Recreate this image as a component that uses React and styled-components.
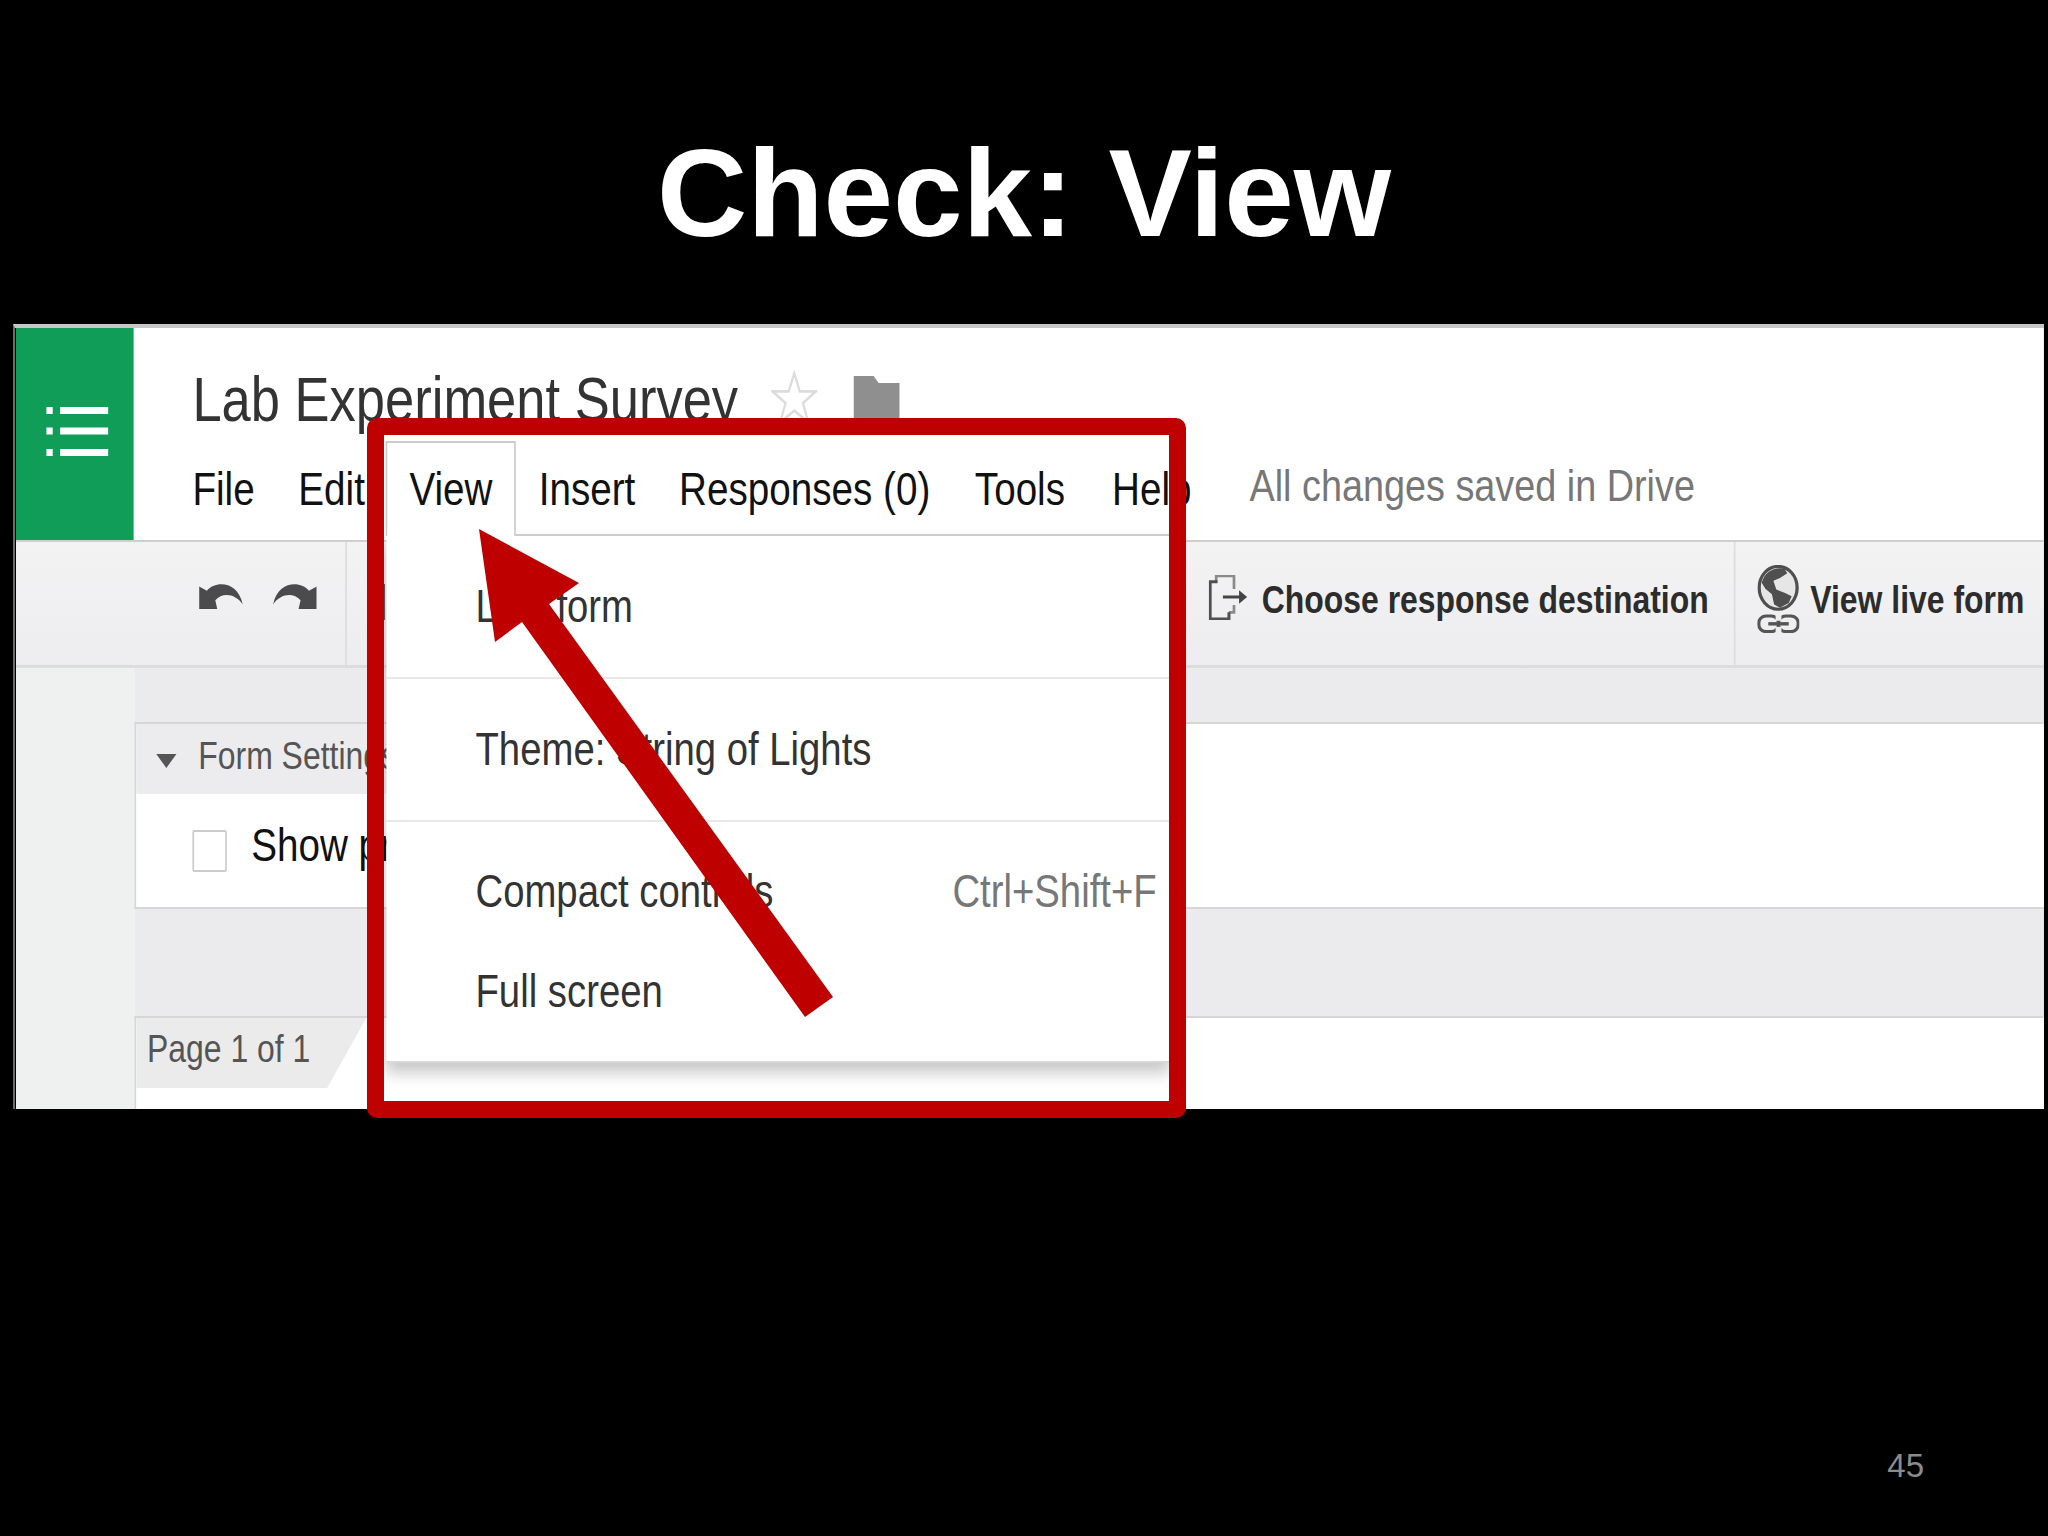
import React from "react";
import styled, { createGlobalStyle } from "styled-components";

const Global = createGlobalStyle`
  html, body { margin: 0; padding: 0; background: #000; }
  #root { width: 2048px; height: 1536px; }
`;

const Slide = styled.div`
  position: relative;
  width: 2048px;
  height: 1536px;
  background: #000;
  overflow: hidden;
  font-family: "Liberation Sans", Arial, sans-serif;
  display: flex;
  flex-direction: column;
`;

const SlideHead = styled.header`
  height: 324px;
  box-sizing: border-box;
  padding-top: 60px;
  display: flex;
  align-items: center;
  justify-content: center;
`;

const SlideTitle = styled.h1`
  margin: 0;
  color: #fff;
  font-size: 125px;
  line-height: 1;
  font-weight: 700;
`;

const Shot = styled.section`
  margin-left: 13px;
  width: 2031px;
  height: 785px;
  box-sizing: border-box;
  border-left: 2px solid #6c6c6c;
  border-top: 4px solid #c6c6c6;
  padding-left: 1px;
  background: #000;
  overflow: hidden;
`;

const Squeezed = styled.div`
  width: 2414px;
  height: 781px;
  transform: scaleX(0.84);
  transform-origin: left top;
  position: relative;
  background: #fff;
  color: #111;
  display: flex;
  flex-direction: column;
`;

const Header = styled.div`
  display: flex;
  height: 214px;
  box-sizing: border-box;
  border-bottom: 2px solid #cfcfcf;
  background: #fff;
`;

const Tile = styled.div`
  width: 140px;
  height: 212px;
  background: #0f9d58;
  display: flex;
  align-items: center;
  justify-content: center;
  padding: 0 0 6px 5px;
  box-sizing: border-box;
`;

const HeaderMain = styled.div`
  flex: 1;
  padding: 40px 0 0 44px;
  display: flex;
  flex-direction: column;
`;

const TitleRow = styled.div`
  display: flex;
  align-items: flex-start;
  padding-left: 26px;
  height: 62px;
`;

const DocTitle = styled.div`
  font-size: 62.5px;
  line-height: 62px;
  color: #333;
`;

const Star = styled.svg`
  width: 55px;
  height: 56px;
  margin: 2px 0 0 39px;
`;

const Folder = styled.svg`
  width: 55px;
  height: 50px;
  margin: 8px 0 0 43px;
`;

const MenuBar = styled.nav`
  display: flex;
  margin-top: 11px;
`;

const MenuItem = styled.div`
  font-size: 46px;
  line-height: 46px;
  height: 95px;
  box-sizing: border-box;
  padding: 23px 26px 0;
  color: #111;
  position: relative;
  z-index: ${(p) => (p.$active ? 3 : 1)};
  background: ${(p) => (p.$active ? "#fff" : "transparent")};
  border: 2px solid ${(p) => (p.$active ? "#ccc" : "transparent")};
  border-bottom: none;
  margin: 0 -2px 0 ${(p) => p.$extra - 2}px;
`;

const Status = styled.div`
  font-size: 45px;
  line-height: 46px;
  padding-top: 22px;
  margin-left: 43px;
  color: #777;
`;

const Toolbar = styled.div`
  height: 126px;
  box-sizing: border-box;
  border-bottom: 3px solid #dcdcdc;
  background: linear-gradient(#f3f3f4, #ededef);
  display: flex;
  align-items: stretch;
`;

const UndoGroup = styled.div`
  width: 394px;
  box-sizing: border-box;
  border-right: 2px solid #dcdcdc;
  padding: 41px 0 0 218px;
  display: flex;
  align-items: flex-start;
  gap: 36px;
`;

const ToolIcon = styled.svg`
  width: 52px;
  height: 26px;
`;

const Stub = styled.div`
  width: 3px;
  height: 36px;
  margin: 42px 0 0 42px;
  background: #333;
`;

const ChooseGroup = styled.div`
  margin-left: auto;
  width: 625px;
  box-sizing: border-box;
  display: flex;
  align-items: center;
  gap: 17px;
  padding-bottom: 8px;
`;

const LiveGroup = styled.div`
  width: 369px;
  box-sizing: border-box;
  border-left: 2px solid #dcdcdc;
  display: flex;
  align-items: center;
  gap: 13px;
  padding: 0 0 8px 26px;
`;

const ChooseIcon = styled.svg`
  width: 46px;
  height: 45px;
  flex: none;
  margin-top: -5px;
`;

const GlobeIcon = styled.svg`
  width: 50px;
  height: 68px;
  flex: none;
  margin-top: -2px;
`;

const ToolLabel = styled.span`
  font-size: 38px;
  font-weight: 700;
  line-height: 1;
  color: #2c2c2c;
  white-space: nowrap;
`;

const Workspace = styled.div`
  flex: 1;
  display: flex;
  min-height: 0;
`;

const Gutter = styled.div`
  width: 141px;
  background: #eff0f0;
`;

const WorkMain = styled.div`
  flex: 1;
  background: #ebebed;
  padding-top: 54px;
  display: flex;
  flex-direction: column;
`;

const SettingsCard = styled.div`
  height: 187px;
  box-sizing: border-box;
  background: #fff;
  border: 2px solid #d6d6d6;
  border-right: none;
`;

const SettingsHead = styled.div`
  width: 420px;
  height: 70px;
  box-sizing: border-box;
  background: #ececee;
  display: flex;
  align-items: center;
  padding: 0 0 6px 24px;
  gap: 26px;
`;

const Caret = styled.span`
  width: 0;
  height: 0;
  border-left: 12px solid transparent;
  border-right: 12px solid transparent;
  border-top: 14px solid #555;
  margin-top: 10px;
`;

const SettingsTitle = styled.span`
  font-size: 38px;
  line-height: 1;
  color: #555;
  white-space: nowrap;
`;

const SettingsRow = styled.div`
  display: flex;
  align-items: flex-start;
  gap: 29px;
  padding: 36px 0 0 67px;
`;

const Checkbox = styled.span`
  width: 41px;
  height: 42px;
  box-sizing: border-box;
  border: 2px solid #ccc;
  border-radius: 2px;
  background: #fff;
`;

const RowText = styled.span`
  font-size: 46px;
  line-height: 1;
  color: #111;
  margin-top: -8px;
`;

const PageCard = styled.div`
  flex: 1;
  margin-top: 107px;
  background: #fff;
  border-top: 2px solid #d6d6d6;
  border-left: 2px solid #d6d6d6;
`;

const PageTab = styled.div`
  width: 274px;
  height: 70px;
  box-sizing: border-box;
  padding: 12px 0 0 13px;
  background: #ebebeb;
  clip-path: polygon(0 0, 100% 0, 83% 100%, 0 100%);
  font-size: 38px;
  line-height: 38px;
  color: #555;
  white-space: nowrap;
`;

const Dropdown = styled.div`
  position: absolute;
  left: 441px;
  top: 206px;
  width: 933px;
  height: 529px;
  box-sizing: border-box;
  background: #fff;
  border-top: 2px solid #ccc;
  border-bottom: 2px solid #d8d8d8;
  box-shadow: 0 10px 16px rgba(0, 0, 0, 0.22);
  z-index: 2;
  display: flex;
  flex-direction: column;
  color: #333;
`;

const DropSection = styled.div`
  flex: ${(p) => (p.$grow ? 1 : "none")};
  height: ${(p) => (p.$grow ? "auto" : "143px")};
  box-sizing: border-box;
  padding-top: ${(p) => (p.$grow ? "20px" : "0")};
  display: flex;
  flex-direction: column;
  justify-content: ${(p) => (p.$grow ? "flex-start" : "center")};
  border-bottom: ${(p) => (p.$grow ? "none" : "2px solid #e8e8e8")};
`;

const DropRow = styled.div`
  display: flex;
  align-items: center;
  justify-content: space-between;
  height: ${(p) => (p.$tall ? "100px" : "auto")};
  padding: 0 16px 0 106px;
  font-size: 45.6px;
  line-height: 46px;
  white-space: nowrap;
`;

const Shortcut = styled.span`
  color: #777;
`;

const RedFrame = styled.div`
  position: absolute;
  left: 367px;
  top: 418px;
  width: 819px;
  height: 700px;
  box-sizing: border-box;
  border: 17px solid #bf0000;
  border-radius: 10px;
  pointer-events: none;
`;

const Arrow = styled.svg`
  position: absolute;
  left: 470px;
  top: 520px;
  width: 370px;
  height: 505px;
`;

const Footer = styled.footer`
  margin-top: 340px;
  padding-right: 124px;
  text-align: right;
  font-size: 33px;
  line-height: 1;
  color: #8b8b8b;
`;

const ListIcon = () => (
  <svg width="74" height="49" viewBox="0 0 62.5 49" preserveAspectRatio="none" fill="#fff">
    <rect x="0" y="0" width="6.5" height="7" />
    <rect x="14" y="0" width="48.5" height="7" />
    <rect x="0" y="20.5" width="6.5" height="7" />
    <rect x="14" y="20.5" width="48.5" height="7" />
    <rect x="0" y="42" width="6.5" height="7" />
    <rect x="14" y="42" width="48.5" height="7" />
  </svg>
);

const UndoIcon = ({ flip }) => (
  <ToolIcon viewBox="0 0 135 75" preserveAspectRatio="none" fill="#4b4b4d">
    <path
      transform={flip ? "translate(135 0) scale(-1 1)" : undefined}
      d="M0 10 L24 22 C50 -6 118 -8 135 62 C112 30 72 26 50 50 L56 75 L0 75 Z"
    />
  </ToolIcon>
);

const menu = [
  { label: "File", extra: 0 },
  { label: "Edit", extra: 0 },
  { label: "View", extra: 1 },
  { label: "Insert", extra: 3 },
  { label: "Responses (0)", extra: 0 },
  { label: "Tools", extra: 1 },
  { label: "Help", extra: 4 },
];

export default function App() {
  return (
    <Slide>
      <Global />
      <SlideHead>
        <SlideTitle>Check: View</SlideTitle>
      </SlideHead>
      <Shot>
        <Squeezed>
          <Header>
            <Tile>
              <ListIcon />
            </Tile>
            <HeaderMain>
              <TitleRow>
                <DocTitle>Lab Experiment Survey</DocTitle>
                <Star viewBox="0 0 100 100" fill="#fff" stroke="#dcdcdc" strokeWidth="5">
                  <polygon points="50,5 62,38 97,38 69,59 80,94 50,73 20,94 31,59 3,38 38,38" />
                </Star>
                <Folder viewBox="0 0 55 50" fill="#8f8f8f">
                  <path d="M0 0 H24 L30 7 H55 V50 H0 Z" />
                </Folder>
              </TitleRow>
              <MenuBar>
                {menu.map((m) => (
                  <MenuItem key={m.label} $active={m.label === "View"} $extra={m.extra}>
                    {m.label}
                  </MenuItem>
                ))}
                <Status>All changes saved in Drive</Status>
              </MenuBar>
            </HeaderMain>
          </Header>
          <Toolbar>
            <UndoGroup>
              <UndoIcon />
              <UndoIcon flip />
            </UndoGroup>
            <Stub />
            <ChooseGroup>
              <ChooseIcon viewBox="0 0 115 135" preserveAspectRatio="none" fill="none">
                <path d="M22 20 V3 H75 V42 M75 90 V112 H60" stroke="#8a8a8a" strokeWidth="8" />
                <path d="M26 20 H4 V132 H60 V112" stroke="#4f4f4f" strokeWidth="9" />
                <path d="M42 66 H98" stroke="#444" strokeWidth="9" />
                <path d="M90 46 L114 66 L90 86 Z" fill="#444" />
              </ChooseIcon>
              <ToolLabel>Choose response destination</ToolLabel>
            </ChooseGroup>
            <LiveGroup>
              <GlobeIcon viewBox="0 0 115 200" preserveAspectRatio="none">
                <ellipse cx="57" cy="67" rx="52" ry="63" fill="#e6e6e6" stroke="#4f4f4f" strokeWidth="9" />
                <path
                  d="M12 52 C20 20 45 6 74 10 L82 24 L62 38 L44 46 L52 72 L76 82 L94 92 L86 112 L62 126 L46 116 L40 86 L22 70 Z"
                  fill="#4f4f4f"
                />
                <rect x="4" y="150" width="54" height="46" rx="20" fill="none" stroke="#555" strokeWidth="9" />
                <rect x="58" y="150" width="54" height="46" rx="20" fill="none" stroke="#555" strokeWidth="9" />
                <rect x="30" y="168" width="56" height="10" fill="#555" />
                <rect x="50" y="146" width="16" height="18" fill="#eee" />
                <rect x="50" y="182" width="16" height="18" fill="#eee" />
              </GlobeIcon>
              <ToolLabel>View live form</ToolLabel>
            </LiveGroup>
          </Toolbar>
          <Workspace>
            <Gutter />
            <WorkMain>
              <SettingsCard>
                <SettingsHead>
                  <Caret />
                  <SettingsTitle>Form Settings</SettingsTitle>
                </SettingsHead>
                <SettingsRow>
                  <Checkbox />
                  <RowText>Show progress bar</RowText>
                </SettingsRow>
              </SettingsCard>
              <PageCard>
                <PageTab>Page 1 of 1</PageTab>
              </PageCard>
            </WorkMain>
          </Workspace>
          <Dropdown>
            <DropSection>
              <DropRow>Live form</DropRow>
            </DropSection>
            <DropSection>
              <DropRow>Theme: String of Lights</DropRow>
            </DropSection>
            <DropSection $grow>
              <DropRow $tall>
                Compact controls
                <Shortcut>Ctrl+Shift+F</Shortcut>
              </DropRow>
              <DropRow $tall>Full screen</DropRow>
            </DropSection>
          </Dropdown>
        </Squeezed>
      </Shot>
      <RedFrame />
      <Arrow viewBox="470 520 370 505" fill="#bf0000">
        <polygon points="479,529 579,583 549,604 833,997 805,1017 522,622 495,642" />
      </Arrow>
      <Footer>45</Footer>
    </Slide>
  );
}
